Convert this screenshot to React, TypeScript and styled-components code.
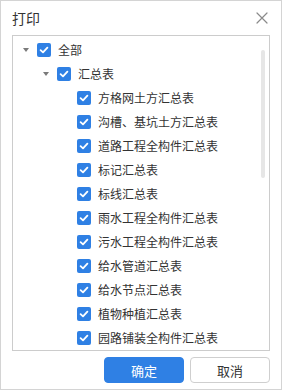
import styled, { createGlobalStyle } from 'styled-components';

const GlobalStyle = createGlobalStyle`
  html, body {
    margin: 0;
    padding: 0;
    background: #ffffff;
  }
  body {
    font-family: "Noto Sans CJK SC", "Noto Sans", sans-serif;
    color: #333333;
  }
`;

const Dialog = styled.div`
  display: flex;
  flex-direction: column;
  width: 282px;
  height: 390px;
  box-sizing: border-box;
  border: 1px solid #d4d4d4;
  background: #ffffff;
`;

const Header = styled.div`
  display: flex;
  align-items: center;
  justify-content: space-between;
  height: 34px;
  padding: 0 12px 0 11px;
`;

const Title = styled.h3`
  margin: 0;
  font-size: 14px;
  font-weight: 400;
  color: #333333;
  line-height: 1;
`;

const CloseButton = styled.button`
  display: flex;
  align-items: center;
  justify-content: center;
  width: 14px;
  height: 14px;
  padding: 0;
  border: none;
  background: none;
  cursor: pointer;
`;

const TreePanel = styled.div`
  display: flex;
  flex: 1;
  min-height: 0;
  margin: 0 11px;
  border: 1px solid #cccccc;
  overflow: hidden;
`;

const TreeList = styled.ul`
  flex: 1;
  margin: 0;
  padding: 2px 0 0;
  list-style: none;
`;

const TreeRow = styled.li<{ depth: number }>`
  display: flex;
  align-items: center;
  height: 24px;
  padding-left: ${(props) => 7 + props.depth * 20}px;
  white-space: nowrap;
`;

const Toggle = styled.span`
  display: flex;
  align-items: center;
  justify-content: center;
  width: 12px;
  height: 12px;
  margin-right: 5px;
`;

const Caret = styled.span`
  width: 0;
  height: 0;
  border-left: 3.5px solid transparent;
  border-right: 3.5px solid transparent;
  border-top: 4px solid #7a7a7a;
`;

const CheckBox = styled.span`
  display: flex;
  align-items: center;
  justify-content: center;
  width: 14px;
  height: 14px;
  border-radius: 2px;
  background: #2f80e4;
  flex-shrink: 0;
`;

const Label = styled.span`
  margin-left: 7px;
  font-size: 12px;
  line-height: 1;
  color: #333333;
`;

const ScrollTrack = styled.div`
  width: 4px;
  margin: 14px 4px 0 0;
`;

const ScrollThumb = styled.div`
  height: 128px;
  border-radius: 2px;
  background: #e6e6e6;
`;

const Footer = styled.div`
  display: flex;
  justify-content: flex-end;
  gap: 6px;
  padding: 6px 11px 6px;
`;

const Button = styled.button<{ primary?: boolean }>`
  width: 80px;
  height: 26px;
  padding: 0;
  border-radius: 4px;
  font-family: "Noto Sans CJK SC", "Noto Sans", sans-serif;
  font-size: 13px;
  cursor: pointer;
  border: 1px solid ${(props) => (props.primary ? '#2f80e4' : '#cfcfcf')};
  background: ${(props) => (props.primary ? '#2f80e4' : '#ffffff')};
  color: ${(props) => (props.primary ? '#ffffff' : '#333333')};
`;

interface TreeItem {
  label: string;
  depth: number;
  expandable?: boolean;
}

const ITEMS: TreeItem[] = [
  { label: '全部', depth: 0, expandable: true },
  { label: '汇总表', depth: 1, expandable: true },
  { label: '方格网土方汇总表', depth: 2 },
  { label: '沟槽、基坑土方汇总表', depth: 2 },
  { label: '道路工程全构件汇总表', depth: 2 },
  { label: '标记汇总表', depth: 2 },
  { label: '标线汇总表', depth: 2 },
  { label: '雨水工程全构件汇总表', depth: 2 },
  { label: '污水工程全构件汇总表', depth: 2 },
  { label: '给水管道汇总表', depth: 2 },
  { label: '给水节点汇总表', depth: 2 },
  { label: '植物种植汇总表', depth: 2 },
  { label: '园路铺装全构件汇总表', depth: 2 },
];

const CheckMark = () => (
  <svg width="10" height="10" viewBox="0 0 10 10">
    <path d="M1.6 5.2 L4 7.4 L8.4 2.6" fill="none" stroke="#ffffff" strokeWidth="1.8" strokeLinecap="round" strokeLinejoin="round" />
  </svg>
);

const CloseIcon = () => (
  <svg width="12" height="12" viewBox="0 0 12 12">
    <path d="M1 1 L11 11 M11 1 L1 11" stroke="#8a8a8a" strokeWidth="1.2" strokeLinecap="round" />
  </svg>
);

const App = () => (
  <>
    <GlobalStyle />
    <Dialog>
      <Header>
        <Title>打印</Title>
        <CloseButton aria-label="关闭">
          <CloseIcon />
        </CloseButton>
      </Header>
      <TreePanel>
        <TreeList>
          {ITEMS.map((item) => (
            <TreeRow key={item.label} depth={item.depth}>
              <Toggle>{item.expandable && <Caret />}</Toggle>
              <CheckBox>
                <CheckMark />
              </CheckBox>
              <Label>{item.label}</Label>
            </TreeRow>
          ))}
        </TreeList>
        <ScrollTrack>
          <ScrollThumb />
        </ScrollTrack>
      </TreePanel>
      <Footer>
        <Button primary>确定</Button>
        <Button>取消</Button>
      </Footer>
    </Dialog>
  </>
);

export default App;
